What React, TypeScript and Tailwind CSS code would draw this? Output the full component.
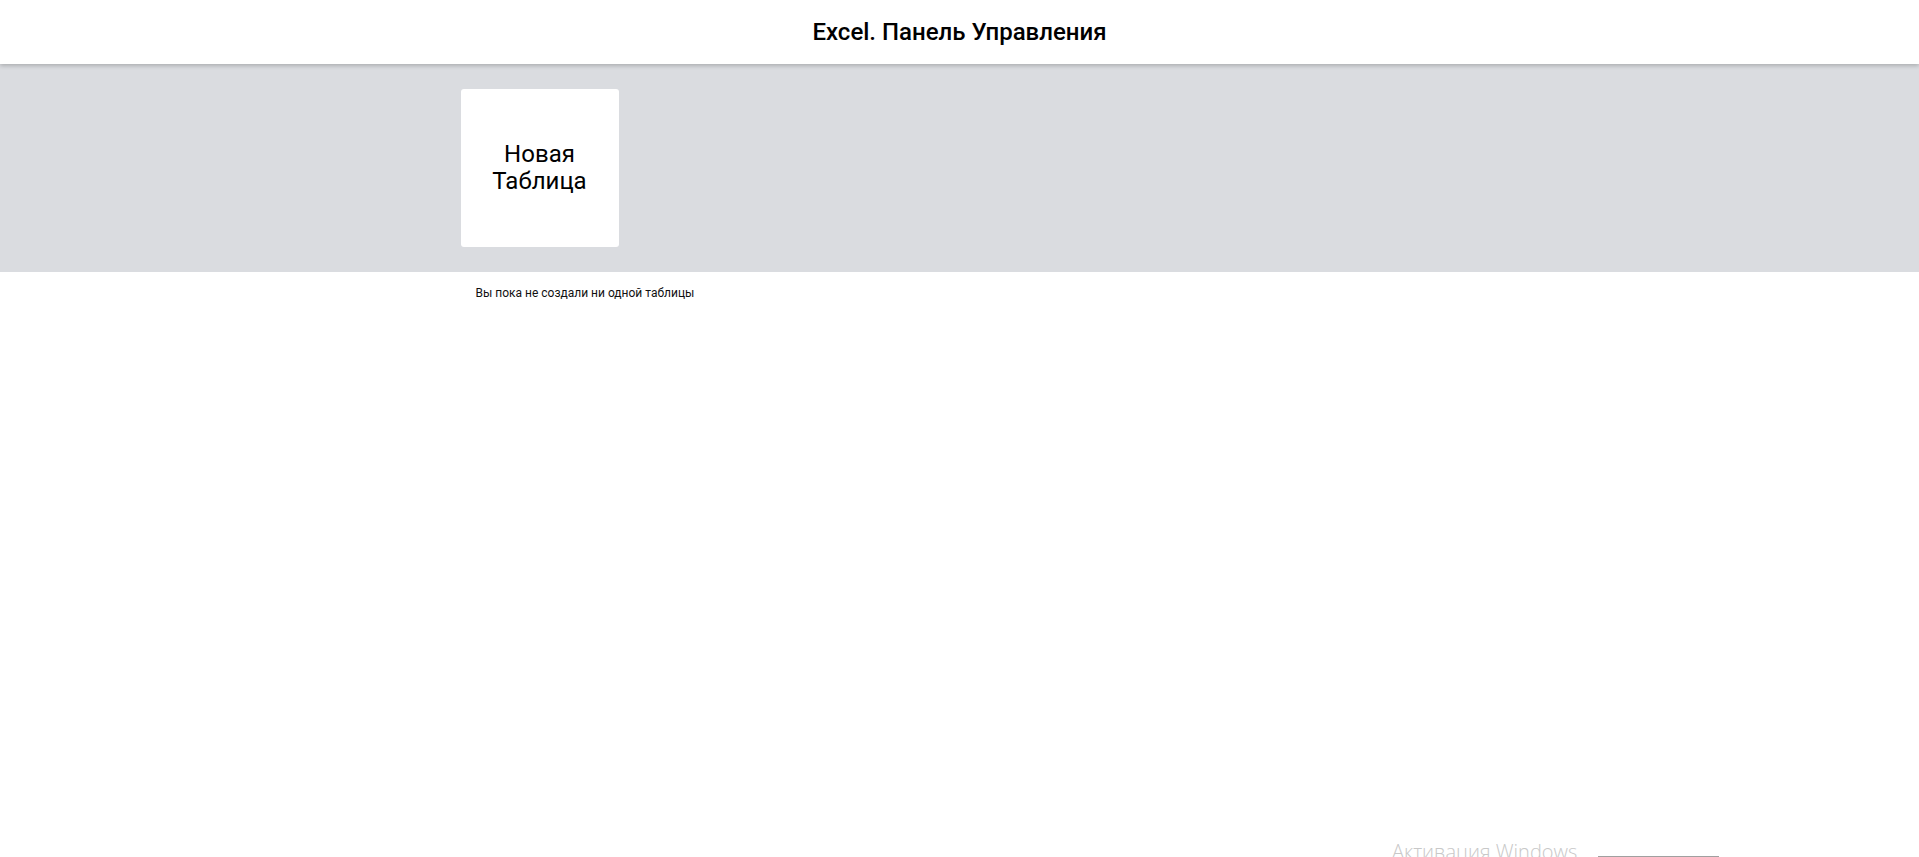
export default function App() {
  return (
    <div className="relative min-h-[857px] bg-white font-['Roboto',sans-serif] text-black overflow-hidden">
      {/* Header */}
      <header className="relative z-10 h-16 flex items-center justify-center bg-white shadow-[0_2px_4px_rgba(0,0,0,0.2)]">
        <h1 className="text-[24px] font-medium leading-none">Excel. Панель Управления</h1>
      </header>

      {/* New table */}
      <section className="bg-[#dadce0] py-[25px]">
        <div className="max-w-[998px] mx-auto">
          <div className="w-[158px] h-[158px] bg-white rounded-[3px] flex items-center justify-center text-center text-[24px] leading-[27px] cursor-pointer">
            Новая
            <br />
            Таблица
          </div>
        </div>
      </section>

      {/* List */}
      <section className="max-w-[998px] mx-auto px-[15px] pt-[14px]">
        <p className="text-[12px] leading-[14px] text-[#111]">Вы пока не создали ни одной таблицы</p>
      </section>

      {/* Windows watermark */}
      <div className="absolute left-[1392px] top-[842px] flex items-start gap-[21px] pointer-events-none">
        <span className="text-[20px] leading-none text-[#c8c8c8] font-['Open_Sans',sans-serif] font-light">Активация Windows</span>
        <span className="block w-[121px] h-[1px] bg-[#a0a0a0] mt-[14px]" />
      </div>
    </div>
  );
}
